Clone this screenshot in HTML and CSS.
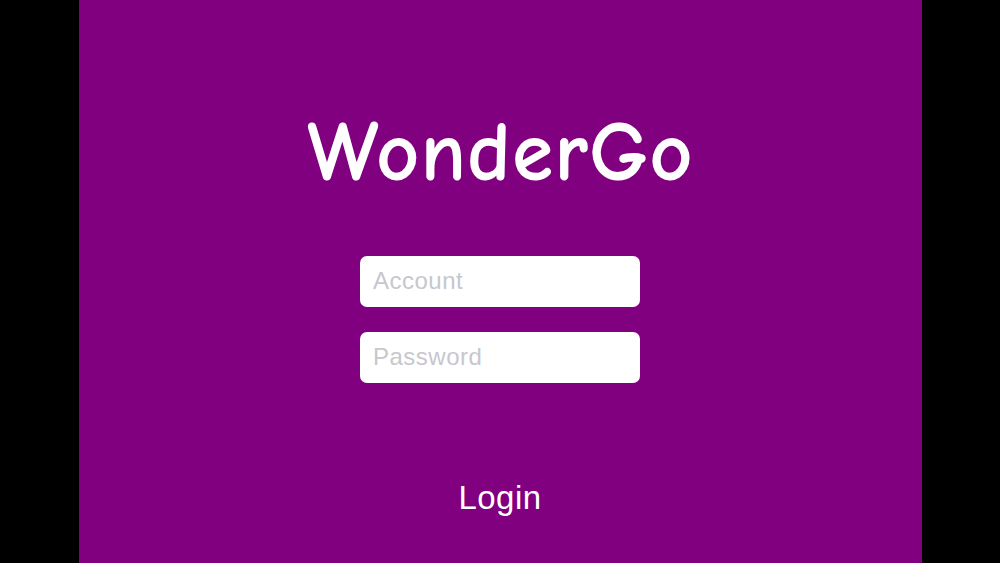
FILE: index.html
```html
<!DOCTYPE html>
<html lang="en">
<head>
<meta charset="utf-8">
<title>WonderGo</title>
<link rel="stylesheet" href="styles.css">
</head>
<body>
<div class="screen">
  <main class="app">
    <h1 class="title">WonderGo</h1>
    <form class="form">
      <input class="field" type="text" placeholder="Account">
      <input class="field" type="password" placeholder="Password">
    </form>
    <button class="login" type="button">Login</button>
  </main>
</div>
</body>
</html>
```
FILE: styles.css
```css
html, body {
  margin: 0;
  padding: 0;
  background: #000;
}
.screen {
  width: 1000px;
  height: 563px;
  display: flex;
  justify-content: center;
  background: #000;
}
.app {
  width: 843px;
  height: 563px;
  background: #800080;
  display: flex;
  flex-direction: column;
  align-items: center;
  padding-top: 113px;
  box-sizing: border-box;
}
.title {
  margin: 0;
  padding-left: 1px;
  font-family: "Comic Sans MS", "Comic Neue", "Open Sans", sans-serif;
  font-weight: bold;
  font-size: 84px;
  letter-spacing: 1px;
  line-height: 80px;
  color: #fff;
}
.form {
  margin-top: 63px;
  display: flex;
  flex-direction: column;
  gap: 25px;
}
.field {
  width: 280px;
  height: 51px;
  box-sizing: border-box;
  border: none;
  border-radius: 7px;
  background: #fff;
  padding: 0 13px 2px;
  font-family: "Liberation Sans", Arial, sans-serif;
  font-size: 24px;
  letter-spacing: 0.5px;
  color: #222;
  outline: none;
}
.field::placeholder {
  color: #c7c7cd;
}
.login {
  margin-top: 95px;
  background: none;
  border: none;
  padding: 0;
  font-family: "Liberation Sans", Arial, sans-serif;
  font-size: 33px;
  letter-spacing: 0.5px;
  line-height: 40px;
  color: #fff;
  cursor: pointer;
}
```
